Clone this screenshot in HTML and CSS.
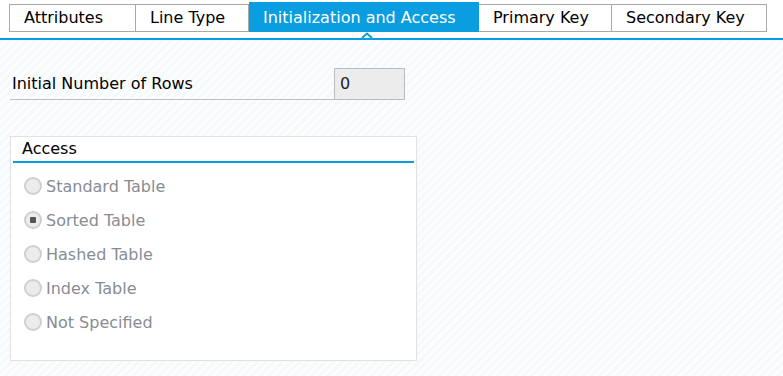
FILE: index.html
```html
<!DOCTYPE html>
<html lang="en">
<head>
  <meta charset="UTF-8" />
  <title>Initialization and Access</title>
  <link rel="stylesheet" href="styles.css">
</head>
<body>

  <!-- TAB STRIP -->
  <div class="tabstrip">
    <div class="tab tab-attr">Attributes</div>
    <div class="tab tab-line">Line Type</div>
    <div class="tab tab-init active">Initialization and Access</div>
    <div class="tab tab-pk">Primary Key</div>
    <div class="tab tab-sk">Secondary Key</div>
  </div>
  <div class="tabline">
    <svg class="caret" width="12" height="6" viewBox="0 0 12 6">
      <path d="M1 6 L6 1.5 L11 6" fill="none" stroke="#0a9ddf" stroke-width="2"/>
    </svg>
  </div>

  <div class="content">
    <div class="field-row">
      <label class="field-label">Initial Number of Rows</label>
      <div class="field-input">0</div>
    </div>

    <div class="groupbox">
      <div class="group-title">Access</div>
      <div class="radio-list">
        <div class="radio"><span class="dot"></span>Standard Table</div>
        <div class="radio checked"><span class="dot"></span>Sorted Table</div>
        <div class="radio"><span class="dot"></span>Hashed Table</div>
        <div class="radio"><span class="dot"></span>Index Table</div>
        <div class="radio"><span class="dot"></span>Not Specified</div>
      </div>
    </div>
  </div>

</body>
</html>
```

FILE: styles.css
```css
* {
  margin: 0; padding: 0;
  box-sizing: border-box;
}

html, body {
  height: 100%;
  overflow: hidden;
}

body {
  font-family: "DejaVu Sans", Verdana, sans-serif;
  font-size: 16px;
  color: #000;
  background: #fff;
}

/* Tabs */
.tabstrip {
  display: flex;
  align-items: flex-end;
  padding: 2px 0 0 9px;
  height: 32px;
}

.tab {
  height: 28px;
  line-height: 26px;
  padding-left: 14px;
  border: 1px solid #a9a9a9;
  border-left: none;
  background: #fff;
  white-space: nowrap;
}

.tab:first-child {
  border-left: 1px solid #a9a9a9;
}

.tab-attr { width: 127px; }
.tab-line { width: 113px; }
.tab-init { width: 230px; }
.tab-pk { width: 133px; }
.tab-sk { width: 155px; }

.tab.active {
  height: 30px;
  line-height: 30px;
  background: #0a9ddf;
  border-color: #0a9ddf;
  color: #fff;
}

.tabline {
  position: relative;
  height: 8px;
  border-bottom: 2px solid #0a9ddf;
}

.caret {
  position: absolute;
  left: 361px;
  bottom: 0;
}

/* Content */
.content {
  height: calc(100% - 40px);
  padding: 28px 10px 0;
  background: repeating-linear-gradient(
    135deg,
    #f6f9fc 0px,
    #f6f9fc 3px,
    #fcfdfe 3px,
    #fcfdfe 6px
  );
}

.field-row {
  display: flex;
  align-items: stretch;
  height: 32px;
}

.field-label {
  width: 324px;
  padding: 6px 0 0 2px;
  border-bottom: 1px solid #c0c0c0;
}

.field-input {
  width: 71px;
  border: 1px solid #bcbcbc;
  background: #ececec;
  padding: 5px 0 0 5px;
  color: #222;
}

.groupbox {
  margin-top: 36px;
  width: 407px;
  height: 225px;
  background: #fff;
  border: 1px solid #e1e1e1;
  padding: 0 2px;
}

.group-title {
  height: 26px;
  padding: 2px 0 0 9px;
  border-bottom: 2px solid #0a9ddf;
}

.radio-list {
  display: flex;
  flex-direction: column;
  gap: 16px;
  padding: 14px 0 0 11px;
}

.radio {
  display: flex;
  align-items: center;
  height: 18px;
  color: #888c93;
}

.dot {
  width: 18px;
  height: 18px;
  margin-right: 4px;
  border-radius: 50%;
  border: 2px solid #cfcfcf;
  background: #ececec;
  display: flex;
  align-items: center;
  justify-content: center;
}

.radio.checked .dot::after {
  content: "";
  width: 6px;
  height: 6px;
  border-radius: 1px;
  background: #555;
}
```
